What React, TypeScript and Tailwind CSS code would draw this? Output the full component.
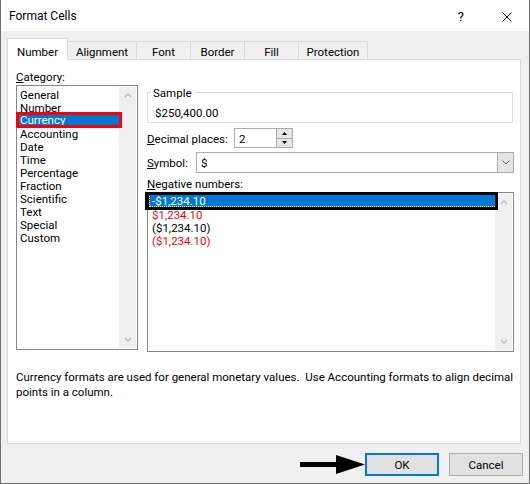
import React from "react";

function Chevron({ dir }: { dir: "up" | "down" }) {
  return (
    <svg width="8" height="5" viewBox="0 0 8 5">
      <polyline
        points={dir === "up" ? "0.8,4.2 4,1 7.2,4.2" : "0.8,0.8 4,4 7.2,0.8"}
        fill="none"
        stroke="#c2c2c2"
        strokeWidth="1.7"
      />
    </svg>
  );
}

function ScrollBar() {
  return (
    <div className="w-[17px] bg-[#f0f0f0] flex flex-col justify-between">
      <div className="h-[17px] flex items-center justify-center">
        <Chevron dir="up" />
      </div>
      <div className="h-[17px] flex items-center justify-center">
        <Chevron dir="down" />
      </div>
    </div>
  );
}

const categories = [
  "General",
  "Number",
  "Currency",
  "Accounting",
  "Date",
  "Time",
  "Percentage",
  "Fraction",
  "Scientific",
  "Text",
  "Special",
  "Custom",
];

const tabs = [
  { label: "Alignment", w: "w-[69px]" },
  { label: "Font", w: "w-[54px]" },
  { label: "Border", w: "w-[54px]" },
  { label: "Fill", w: "w-[54px]" },
  { label: "Protection", w: "w-[69px]" },
];

export default function App() {
  return (
    <div className="w-[530px] h-[484px] flex flex-col bg-[#f0f0f0] border-x border-b border-[#707070] font-['Roboto',sans-serif] text-[11.5px] leading-[15px] text-black overflow-hidden">
      {/* Title bar */}
      <div className="h-[31px] shrink-0 bg-white flex items-center pt-[2px]">
        <span className="ml-[8px] text-[12px]">Format Cells</span>
        <span className="ml-auto text-[13px] leading-[13px]">?</span>
        <svg className="ml-[38px] mr-[17px]" width="10" height="10" viewBox="0 0 10 10">
          <path d="M0.5 0.5 L9.5 9.5 M9.5 0.5 L0.5 9.5" stroke="#000" strokeWidth="1" fill="none" />
        </svg>
      </div>

      {/* Tabs */}
      <div className="flex items-end h-[21px] mt-[7px] ml-[6px] shrink-0">
        <div className="relative z-10 w-[61px] h-[22px] -mb-[1px] bg-white border-x border-t border-[#d9d9d9] flex justify-center pt-[6px]">
          Number
        </div>
        {tabs.map((t) => (
          <div
            key={t.label}
            className={`${t.w} h-[18px] border-t border-r border-[#d9d9d9] flex justify-center pt-[3px]`}
          >
            {t.label}
          </div>
        ))}
      </div>

      {/* Panel */}
      <div className="ml-[6px] w-[514px] h-[385px] shrink-0 bg-white border border-[#d9d9d9] flex flex-col">
        <div className="flex pl-[8px] items-start">
          {/* Category column */}
          <div className="w-[122px] pt-[10px] flex flex-col">
            <div className="h-[15px]">
              <u>C</u>ategory:
            </div>
            <div className="h-[265px] border border-[#828790] p-[1px] flex bg-white">
              <div className="flex-1 flex flex-col">
                {categories.map((c) =>
                  c === "Currency" ? (
                    <div
                      key={c}
                      className="relative h-[13px] leading-[9px] pl-[2px] pt-[3px] bg-[#0078d7] text-white"
                    >
                      {c}
                      <div className="absolute left-[-2px] right-[-3px] top-[-1px] bottom-[-2px] border-[3px] border-[#ff0000]" />
                    </div>
                  ) : (
                    <div key={c} className="h-[13px] leading-[9px] pl-[2px] pt-[4px]">
                      {c}
                    </div>
                  )
                )}
              </div>
              <ScrollBar />
            </div>
          </div>

          {/* Right column */}
          <div className="ml-[9px] w-[367px] pt-[24px] flex flex-col">
            <fieldset className="border border-[#dcdcdc] mr-[1px]">
              <legend className="ml-[3px] px-[2px] pt-[2px] leading-[15px]">Sample</legend>
              <div className="pl-[7px] pt-[5px] pb-[1px] leading-[15px]">$250,400.00</div>
            </fieldset>

            <div className="mt-[5px] h-[20px] flex items-center">
              <div className="w-[87px] pt-[2px]">
                <u>D</u>ecimal places:
              </div>
              <div className="w-[59px] h-[20px] border border-[#acacac] flex">
                <div className="flex-1 pl-[4px] pt-[2px] flex items-center">2</div>
                <div className="w-[16px] flex flex-col border-l border-[#acacac] bg-[#e6e6e6]">
                  <div className="flex-1 flex items-center justify-center border-b border-[#acacac]">
                    <svg width="5" height="3" viewBox="0 0 5 3">
                      <polygon points="0,3 2.5,0 5,3" fill="#000" />
                    </svg>
                  </div>
                  <div className="flex-1 flex items-center justify-center">
                    <svg width="5" height="3" viewBox="0 0 5 3">
                      <polygon points="0,0 2.5,3 5,0" fill="#000" />
                    </svg>
                  </div>
                </div>
              </div>
            </div>

            <div className="mt-[4px] h-[21px] flex items-center">
              <div className="w-[49px] pt-[2px]">
                <u>S</u>ymbol:
              </div>
              <div className="w-[318px] h-[21px] border border-[#adadad] flex">
                <div className="flex-1 pl-[4px] pt-[2px] flex items-center">$</div>
                <div className="w-[16px] border-l border-[#adadad] bg-[#e5e5e5] flex items-center justify-center">
                  <svg width="8" height="5" viewBox="0 0 8 5">
                    <polyline points="0.5,0.5 4,4 7.5,0.5" fill="none" stroke="#606060" strokeWidth="1" />
                  </svg>
                </div>
              </div>
            </div>

            <div className="mt-[4px] h-[15px]">
              <u>N</u>egative numbers:
            </div>

            <div className="h-[160px] border border-[#828790] p-[1px] flex bg-white">
              <div className="flex-1 flex flex-col">
                <div className="relative h-[13px] leading-[9px] pl-[3px] pt-[3px] bg-[#0078d7] text-white">
                  <div className="absolute inset-0 border-l border-b border-dotted border-white" />
                  -$1,234.10
                  <div className="absolute left-[-4px] right-[-3px] top-[-2px] bottom-[-3px] border-[3px] border-l-[4px] border-black" />
                </div>
                <div className="h-[13px] leading-[9px] pl-[3px] pt-[4px] text-[#ff0000]">$1,234.10</div>
                <div className="h-[13px] leading-[9px] pl-[3px] pt-[4px]">($1,234.10)</div>
                <div className="h-[13px] leading-[9px] pl-[3px] pt-[4px] text-[#ff0000]">($1,234.10)</div>
              </div>
              <ScrollBar />
            </div>
          </div>
        </div>

        <div className="mt-[18px] pl-[8px] leading-[15px] whitespace-pre">
          {"Currency formats are used for general monetary values.  Use Accounting formats to align decimal\npoints in a column."}
        </div>
      </div>

      {/* Buttons */}
      <div className="mt-[9px] h-[23px] shrink-0 flex items-center justify-end pr-[6px]">
        <svg width="65" height="20" viewBox="0 0 65 20">
          <rect x="0" y="7" width="38" height="5" fill="#000" />
          <polygon points="36,0 65,9.5 36,19" fill="#000" />
        </svg>
        <div className="w-[74px] h-[23px] border-2 border-[#0078d7] bg-[#e1e1e1] flex items-center justify-center pt-[2px]">
          OK
        </div>
        <div className="ml-[10px] w-[74px] h-[23px] border border-[#adadad] bg-[#e1e1e1] flex items-center justify-center pt-[2px]">
          Cancel
        </div>
      </div>
    </div>
  );
}
